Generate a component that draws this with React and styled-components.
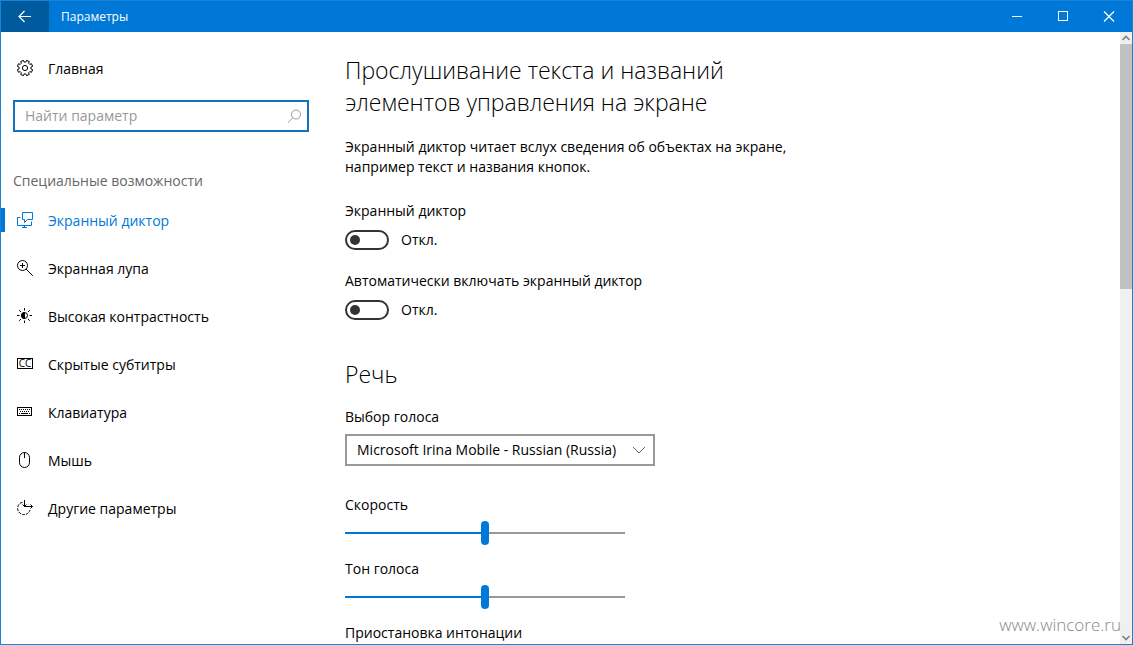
import { useState } from 'react'
import styled, { createGlobalStyle, css } from 'styled-components'

const ACCENT = '#0078d7'

const navItems = [
  { id: 'narrator', text: 'Экранный диктор' },
  { id: 'magnifier', text: 'Экранная лупа' },
  { id: 'contrast', text: 'Высокая контрастность' },
  { id: 'captions', text: 'Скрытые субтитры' },
  { id: 'keyboard', text: 'Клавиатура' },
  { id: 'mouse', text: 'Мышь' },
  { id: 'other', text: 'Другие параметры' }
]

const gearPoints = () => {
  const points = []

  for (let i = 0; i < 8; i++) {
    [[-14, 6], [-11, 7.8], [11, 7.8], [14, 6]].forEach(([shift, radius]) => {
      const angle = (i * 45 + 22.5 + shift) * Math.PI / 180
      points.push(`${(8 + radius * Math.cos(angle)).toFixed(2)},${(8 + radius * Math.sin(angle)).toFixed(2)}`)
    })
  }

  return points.join(' ')
}

const icons = {
  gear: (
    <>
      <polygon points={gearPoints()} strokeLinejoin='round' />
      <circle cx='8' cy='8' r='2.6' />
    </>
  ),
  narrator: (
    <>
      <path d='M5.5 .5H15.5V7.5H10.5L7.5 10.5V7.5H5.5Z' />
      <path d='M3.5 5.5H.5V13.5H14.5V9.5' />
      <path d='M7.5 13.5V15.5M5 15.5H10' />
    </>
  ),
  magnifier: (
    <>
      <circle cx='5.5' cy='5.5' r='5' />
      <path d='M9 9L15.8 15.8M5.5 3V8M3 5.5H8' />
    </>
  ),
  contrast: (
    <>
      <circle cx='7.5' cy='7.5' r='3' />
      <path d='M7.5 4.5A3 3 0 0 0 7.5 10.5Z' fill='currentColor' />
      <path d='M7.5 0V2.5M7.5 12.5V15M0 7.5H2.5M12.5 7.5H15M2.2 2.2L4 4M11 11L12.8 12.8M2.2 12.8L4 11M11 4L12.8 2.2' />
    </>
  ),
  captions: (
    <>
      <rect x='.5' y='2.5' width='15' height='10' />
      <text x='8' y='11' textAnchor='middle' fontSize='10' fill='currentColor' stroke='none'>CC</text>
    </>
  ),
  keyboard: (
    <>
      <rect x='.5' y='3.5' width='14' height='8' />
      <path d='M2 5.5H13M3 7.5H13' strokeDasharray='1 1' />
      <path d='M2 9.5H3M4 9.5H11M12 9.5H13' />
    </>
  ),
  mouse: (
    <path d='M2.5 5.5A5 5 0 0 1 12.5 5.5V10.5A5 5 0 0 1 12.5 10.5A5 5 0 0 1 2.5 10.5ZM7.5 .5V6' />
  ),
  other: (
    <>
      <path d='M5.5 2.2A6.3 6.3 0 1 0 13 10' strokeDasharray='3 1' />
      <path d='M7.5 0V6.5H15.5M5.5 4.5L7.5 6.5L9.5 4.5M13.5 4.5L15.5 6.5L13.5 8.5' />
    </>
  ),
  search: (
    <>
      <circle cx='9' cy='6.5' r='4.5' />
      <path d='M5.8 9.8L1 14.5' />
    </>
  ),
  back: <path d='M14 7.5H2M7.5 2L2 7.5L7.5 13' strokeWidth='1.2' />,
  minimize: <path d='M3 7.5H13' />,
  maximize: <rect x='3.5' y='2.5' width='9' height='9' />,
  close: <path d='M3 2.5L13 12.5M13 2.5L3 12.5' strokeWidth='1.2' />,
  down: <path d='M2 5L8 11L14 5' />,
  scrollUp: <path d='M4.5 10L8 6.5L11.5 10' strokeWidth='1.6' />,
  scrollDown: <path d='M4.5 6L8 9.5L11.5 6' strokeWidth='1.6' />
}

const Icon = ({ name, className }) => (
  <StyledSvg className={className} viewBox='0 0 16 16' aria-hidden='true'>
    {icons[name]}
  </StyledSvg>
)

const Toggle = ({ id, label }) => {
  const [isOn, setIsOn] = useState(false)

  return (
    <StyledField $gap={9}>
      <label htmlFor={id}>{label}</label>
      <StyledToggleRow>
        <StyledSwitch
          id={id}
          type='checkbox'
          role='switch'
          checked={isOn}
          onChange={(e) => setIsOn(e.target.checked)}
        />
        <span>{isOn ? 'Вкл.' : 'Откл.'}</span>
      </StyledToggleRow>
    </StyledField>
  )
}

const Slider = ({ id, label }) => {
  const [value, setValue] = useState(50)

  return (
    <StyledField $gap={6}>
      <label htmlFor={id}>{label}</label>
      <StyledRange
        id={id}
        type='range'
        min='0'
        max='100'
        value={value}
        onChange={(e) => setValue(e.target.value)}
        style={{ '--fill': `${value}%` }}
      />
    </StyledField>
  )
}

const App = () => {
  const [activeItem, setActiveItem] = useState('narrator')

  return (
    <StyledWindow>
      <GlobalStyle />

      <StyledTitleBar>
        <StyledBackButton aria-label='Назад'>
          <Icon name='back' />
        </StyledBackButton>
        <StyledTitle>Параметры</StyledTitle>
        <StyledTitleButton aria-label='Свернуть'>
          <Icon name='minimize' />
        </StyledTitleButton>
        <StyledTitleButton aria-label='Развернуть'>
          <Icon name='maximize' />
        </StyledTitleButton>
        <StyledTitleButton aria-label='Закрыть'>
          <Icon name='close' />
        </StyledTitleButton>
      </StyledTitleBar>

      <StyledBody>
        <StyledSidebar>
          <StyledNavLink href='#home'>
            <StyledNavIcon name='gear' />
            Главная
          </StyledNavLink>

          <StyledSearch>
            <StyledSearchInput type='text' placeholder='Найти параметр' aria-label='Найти параметр' />
            <Icon name='search' />
          </StyledSearch>

          <StyledGroupTitle>Специальные возможности</StyledGroupTitle>

          <nav>
            {navItems.map(({ id, text }) => (
              <StyledNavLink
                key={id}
                href={`#${id}`}
                $isActive={id === activeItem}
                onClick={() => setActiveItem(id)}
              >
                <StyledNavIcon name={id} />
                {text}
              </StyledNavLink>
            ))}
          </nav>
        </StyledSidebar>

        <StyledMain>
          <StyledHeading as='h1'>
            Прослушивание текста и названий элементов управления на экране
          </StyledHeading>
          <StyledDescription>
            Экранный диктор читает вслух сведения об объектах на экране, например текст и названия кнопок.
          </StyledDescription>

          <StyledGroup $gap={21}>
            <Toggle id='narrator-on' label='Экранный диктор' />
            <Toggle id='narrator-auto' label='Автоматически включать экранный диктор' />
          </StyledGroup>

          <StyledHeading>Речь</StyledHeading>

          <StyledField $gap={7}>
            <label htmlFor='voice'>Выбор голоса</label>
            <StyledSelectBox>
              <StyledSelect id='voice'>
                <option>Microsoft Irina Mobile - Russian (Russia)</option>
              </StyledSelect>
              <StyledSelectIcon name='down' />
            </StyledSelectBox>
          </StyledField>

          <StyledSliders $gap={14}>
            <Slider id='speed' label='Скорость' />
            <Slider id='pitch' label='Тон голоса' />
            <div>Приостановка интонации</div>
          </StyledSliders>
        </StyledMain>

        <StyledScrollbar>
          <StyledScrollButton aria-label='Вверх'>
            <Icon name='scrollUp' />
          </StyledScrollButton>
          <StyledTrack>
            <StyledThumb />
          </StyledTrack>
          <StyledScrollButton aria-label='Вниз'>
            <Icon name='scrollDown' />
          </StyledScrollButton>
        </StyledScrollbar>

        <StyledWatermark>www.wincore.ru</StyledWatermark>
      </StyledBody>
    </StyledWindow>
  )
}

const GlobalStyle = createGlobalStyle`
  * {
    box-sizing: border-box;
  }

  body {
    margin: 0;
    background-color: white;
    color: black;
    font-family: 'Open Sans', 'Noto Sans', sans-serif;
    font-size: 14px;
    line-height: 20px;
  }

  button,
  input,
  select {
    margin: 0;
    font: inherit;
    color: inherit;
  }
`

const StyledSvg = styled.svg`
  flex: none;
  width: 16px;
  height: 16px;
  fill: none;
  stroke: currentColor;
  stroke-width: 1;
`

const StyledWindow = styled.div`
  height: 100vh;
  display: flex;
  flex-direction: column;
  border: 1px solid #1883d7;
`

const StyledTitleBar = styled.header`
  flex: none;
  height: 31px;
  display: flex;
  background-color: ${ACCENT};
  color: white;
`

const StyledTitleButton = styled.button`
  width: 46px;
  padding: 0;
  display: flex;
  align-items: center;
  justify-content: center;
  border: 0;
  background-color: transparent;
`

const StyledBackButton = styled(StyledTitleButton)`
  width: 48px;
  background-color: #005a9e;
`

const StyledTitle = styled.span`
  flex: 1;
  align-self: center;
  padding-left: 12px;
  font-size: 12px;
`

const StyledBody = styled.div`
  position: relative;
  flex: 1;
  min-height: 0;
  display: flex;
`

const StyledSidebar = styled.aside`
  flex: none;
  width: 320px;
  padding-top: 13px;
`

const StyledNavLink = styled.a`
  height: 48px;
  display: flex;
  align-items: center;
  column-gap: 15px;
  padding-left: 16px;
  color: black;
  text-decoration: none;

  ${({ $isActive }) => $isActive && css`
    color: ${ACCENT};
    background: linear-gradient(${ACCENT}, ${ACCENT}) left top 11px / 4px 24px no-repeat;
  `}
`

const StyledNavIcon = styled(Icon)`
  margin-bottom: 2px;
`

const StyledSearch = styled.div`
  height: 32px;
  margin: 7px 12px 39px;
  display: flex;
  align-items: center;
  padding-right: 4px;
  border: 2px solid #1373bd;
  color: #999;
`

const StyledSearchInput = styled.input`
  flex: 1;
  min-width: 0;
  padding: 0 10px;
  border: 0;
  outline: 0;
  background-color: transparent;
  color: black;

  &::placeholder {
    color: #999;
  }
`

const StyledGroupTitle = styled.div`
  margin-bottom: 6px;
  padding-left: 12px;
  color: #666;
`

const StyledMain = styled.main`
  flex: 1;
  min-width: 0;
  padding: 22px 24px 0;
  overflow-y: auto;
  scrollbar-width: none;
`

const StyledHeading = styled.h2`
  max-width: 440px;
  margin: 0;
  font-size: 23px;
  font-weight: 300;
  line-height: 32px;
`

const StyledDescription = styled.p`
  max-width: 460px;
  margin: 19px 0 24px;
`

const StyledGroup = styled.div`
  display: flex;
  flex-direction: column;
  row-gap: ${({ $gap }) => $gap}px;
  margin-bottom: 38px;
`

const StyledSliders = styled(StyledGroup)`
  margin: 29px 0 0;
`

const StyledField = styled.div`
  display: flex;
  flex-direction: column;
  align-items: flex-start;
  row-gap: ${({ $gap }) => $gap}px;

  ${StyledHeading} + & {
    margin-top: 17px;
  }
`

const StyledToggleRow = styled.div`
  display: flex;
  align-items: center;
  column-gap: 12px;
`

const StyledSwitch = styled.input`
  appearance: none;
  width: 44px;
  height: 20px;
  display: flex;
  align-items: center;
  padding: 0 3px;
  border: 2px solid #333;
  border-radius: 10px;

  &::before {
    content: '';
    width: 10px;
    height: 10px;
    border-radius: 50%;
    background-color: #333;
  }

  &:checked {
    justify-content: flex-end;
    border-color: ${ACCENT};
    background-color: ${ACCENT};
  }

  &:checked::before {
    background-color: white;
  }
`

const StyledSelectBox = styled.div`
  position: relative;
  width: 310px;
  max-width: 100%;
`

const StyledSelect = styled.select`
  appearance: none;
  width: 100%;
  height: 32px;
  padding: 0 30px 0 10px;
  border: 2px solid #999;
  border-radius: 0;
  background-color: white;
`

const StyledSelectIcon = styled(Icon)`
  position: absolute;
  top: 8px;
  right: 8px;
  color: #666;
  pointer-events: none;
`

const StyledRange = styled.input`
  appearance: none;
  width: 280px;
  max-width: 100%;
  height: 24px;
  background: linear-gradient(to right, ${ACCENT} var(--fill), #999 var(--fill)) center / 100% 2px no-repeat;

  &::-webkit-slider-thumb {
    appearance: none;
    width: 8px;
    height: 24px;
    border-radius: 4px;
    background-color: ${ACCENT};
  }
`

const StyledScrollbar = styled.div`
  flex: none;
  width: 12px;
  display: flex;
  flex-direction: column;
  background-color: #f0f0f0;
`

const StyledScrollButton = styled.button`
  height: 12px;
  padding: 0;
  display: flex;
  align-items: center;
  justify-content: center;
  border: 0;
  background-color: transparent;
  color: #808080;
`

const StyledTrack = styled.div`
  flex: 1;
`

const StyledThumb = styled.div`
  height: calc(100% * 5 / 12);
  background-color: #c1c1c1;
`

const StyledWatermark = styled.div`
  position: absolute;
  right: 11px;
  bottom: 9px;
  color: #888;
  font-size: 17px;
  font-weight: 300;
`

export default App
